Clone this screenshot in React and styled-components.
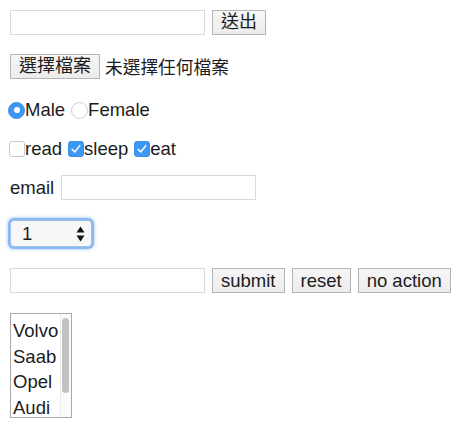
import React from 'react';
import styled, { createGlobalStyle } from 'styled-components';

const Global = createGlobalStyle`
  html, body { margin: 0; padding: 0; background: #fff; }
  body {
    font-family: "Liberation Sans", Arial, "Noto Sans CJK TC", sans-serif;
    color: #1c1c1c;
    font-size: 18.5px;
  }
  * { box-sizing: border-box; }
`;

const Page = styled.form`
  display: flex;
  flex-direction: column;
  align-items: flex-start;
  padding-left: 10px;
  width: 468px;
  height: 432px;
`;

const Row = styled.div`
  display: flex;
  align-items: center;
  height: ${p => p.$h}px;
  margin-top: ${p => p.$mt}px;
  gap: ${p => p.$gap ?? 0}px;
`;

const TextInput = styled.input`
  width: ${p => p.$w || 195}px;
  height: 25px;
  margin: 0;
  padding: 0 4px;
  border: 1px solid #dadada;
  background: #fff;
  font: inherit;
  outline: none;
`;

const Button = styled.button`
  height: 25px;
  margin: 0;
  padding: 0 ${p => p.$px ?? 8}px;
  border: 1px solid #b4b4b4;
  border-radius: 0;
  background: linear-gradient(#f6f6f6, #ececec);
  color: #1c1c1c;
  font: inherit;
  font-size: ${p => p.$fs || 18.5}px;
  line-height: 23px;
  font-family: "Liberation Sans", Arial, "Noto Sans CJK TC", sans-serif;
`;

const CjkText = styled.span`
  font-family: "Noto Sans CJK TC", sans-serif;
  font-size: 17.7px;
  margin-left: 5px;
  line-height: 25px;
`;

const Label = styled.span`
  line-height: 22px;
  margin-right: ${p => p.$mr || 0}px;
`;

const RadioDot = styled.span`
  width: 17px;
  height: 17px;
  border-radius: 50%;
  flex: none;
  margin-left: ${p => p.$ml || 0}px;
  background: ${p => (p.$on ? '#3d97f5' : '#fff')};
  border: 1px solid ${p => (p.$on ? '#3a8fea' : '#cfcfcf')};
  display: flex;
  align-items: center;
  justify-content: center;
  &::after {
    content: '';
    display: ${p => (p.$on ? 'block' : 'none')};
    width: 6px;
    height: 6px;
    border-radius: 50%;
    background: #fff;
  }
`;

const Box = styled.span`
  width: 16px;
  height: 16px;
  flex: none;
  border-radius: 3px;
  margin-left: ${p => p.$ml || 0}px;
  background: ${p => (p.$on ? '#3d97f5' : '#fff')};
  border: 1px solid ${p => (p.$on ? '#3a8fea' : '#c9c9c9')};
  display: flex;
  align-items: center;
  justify-content: center;
`;

const Check = () => (
  <svg width="12" height="12" viewBox="0 0 12 12">
    <path d="M2.2 6.4 L4.8 9 L9.8 2.6" fill="none" stroke="#fff" strokeWidth="1.5" strokeLinecap="round" strokeLinejoin="round" />
  </svg>
);

const SelectBox = styled.div`
  width: 82px;
  height: 27px;
  border-radius: 4px;
  border: 1px solid #9fc0ee;
  box-shadow: 0 0 0 2px #8ab8f2, 0 0 3px 3px rgba(120, 170, 240, 0.45);
  background: #f7f7f7;
  display: flex;
  align-items: center;
  justify-content: space-between;
  padding: 0 6px 0 11px;
`;

const Arrows = () => (
  <svg width="9" height="16" viewBox="0 0 9 16">
    <path d="M4.5 0.5 L8.5 6.5 L0.5 6.5 Z" fill="#111" />
    <path d="M4.5 15.5 L8.5 9.5 L0.5 9.5 Z" fill="#111" />
  </svg>
);

const ListBox = styled.div`
  width: 62px;
  height: 105px;
  border: 1px solid #a9a9a9;
  display: flex;
  overflow: hidden;
`;

const Options = styled.div`
  flex: 1;
  display: flex;
  flex-direction: column;
  padding: 4px 0 0 2px;
`;

const Option = styled.div`
  height: 25.7px;
  line-height: 25.7px;
  white-space: nowrap;
`;

const Track = styled.div`
  width: 11px;
  flex: none;
  border-left: 1px solid #ececec;
  background: #fafafa;
  padding: 4px 2px 0 1px;
`;

const Thumb = styled.div`
  width: 7px;
  height: 75px;
  border-radius: 4px;
  background: #c2c2c2;
`;

export default function App() {
  return (
    <>
      <Global />
      <Page onSubmit={e => e.preventDefault()}>
        <Row $h={25} $mt={10} $gap={7}>
          <TextInput type="text" />
          <Button type="submit" $fs={18}>送出</Button>
        </Row>

        <Row $h={25} $mt={19}>
          <Button type="button" $fs={18}>選擇檔案</Button>
          <CjkText>未選擇任何檔案</CjkText>
        </Row>

        <Row $h={22} $mt={20}>
          <RadioDot $on $ml={-2} />
          <Label $mr={6}>Male</Label>
          <RadioDot />
          <Label>Female</Label>
        </Row>

        <Row $h={22} $mt={17}>
          <Box $ml={-1} />
          <Label $mr={6}>read</Label>
          <Box $on><Check /></Box>
          <Label $mr={6}>sleep</Label>
          <Box $on><Check /></Box>
          <Label>eat</Label>
        </Row>

        <Row $h={25} $mt={15} $gap={7}>
          <Label>email</Label>
          <TextInput type="email" />
        </Row>

        <Row $h={27} $mt={20}>
          <SelectBox>
            <span>1</span>
            <Arrows />
          </SelectBox>
        </Row>

        <Row $h={25} $mt={21} $gap={7}>
          <TextInput type="text" />
          <Button type="submit">submit</Button>
          <Button type="reset">reset</Button>
          <Button type="button">no action</Button>
        </Row>

        <Row $h={105} $mt={20}>
          <ListBox>
            <Options>
              <Option>Volvo</Option>
              <Option>Saab</Option>
              <Option>Opel</Option>
              <Option>Audi</Option>
            </Options>
            <Track>
              <Thumb />
            </Track>
          </ListBox>
        </Row>
      </Page>
    </>
  );
}
